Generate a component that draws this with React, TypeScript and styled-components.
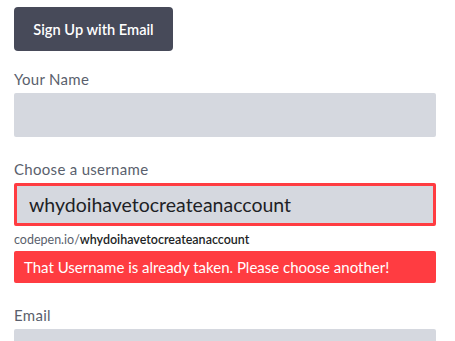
import React from 'react';
import styled, { createGlobalStyle } from 'styled-components';

const GlobalStyle = createGlobalStyle`
  html, body {
    margin: 0;
    padding: 0;
    background: #ffffff;
    font-family: Lato, "Noto Sans", sans-serif;
    overflow: hidden;
  }
`;

const Page = styled.div`
  width: 422px;
  padding: 7px 19px 0 14px;
`;

const SignUpButton = styled.button`
  display: block;
  width: 159px;
  height: 44px;
  padding: 0;
  margin: 0 0 18px 0;
  border: none;
  border-radius: 4px;
  background: #474a59;
  color: #ffffff;
  font-family: Lato, sans-serif;
  font-size: 14.6px;
  font-weight: 600;
  cursor: pointer;
`;

const Field = styled.div`
  margin-bottom: 22px;
`;

const Label = styled.label`
  display: block;
  font-size: 15px;
  line-height: 20px;
  color: #5a5f6d;
  letter-spacing: 0.3px;
  margin-bottom: 4px;
`;

const TextInput = styled.input<{ $error?: boolean }>`
  display: block;
  box-sizing: border-box;
  width: 100%;
  height: ${p => (p.$error ? '43px' : '44px')};
  margin: 0;
  padding: 0 12px;
  border: ${p => (p.$error ? '3px solid #ff3c41' : 'none')};
  border-radius: 2px;
  background: #d5d8df;
  color: #1e1f26;
  font-family: Lato, sans-serif;
  font-size: 19.5px;
  outline: none;
`;

const Hint = styled.div`
  font-size: 12.5px;
  line-height: 16px;
  color: #5a5f6d;
  margin: 6px 0 3px;

  strong {
    color: #1e1f26;
    font-weight: 600;
  }
`;

const ErrorBar = styled.div`
  height: 32px;
  display: flex;
  align-items: center;
  padding: 0 10px;
  border-radius: 2px;
  background: #ff3c41;
  color: #ffffff;
  font-size: 15px;
`;

export default function App() {
  return (
    <>
      <GlobalStyle />
      <Page>
        <SignUpButton>Sign Up with Email</SignUpButton>
        <Field>
          <Label>Your Name</Label>
          <TextInput type="text" readOnly />
        </Field>
        <Field>
          <Label>Choose a username</Label>
          <TextInput $error type="text" value="whydoihavetocreateanaccount" readOnly />
          <Hint>
            codepen.io/<strong>whydoihavetocreateanaccount</strong>
          </Hint>
          <ErrorBar>That Username is already taken. Please choose another!</ErrorBar>
        </Field>
        <Field>
          <Label>Email</Label>
          <TextInput type="email" readOnly />
        </Field>
      </Page>
    </>
  );
}
